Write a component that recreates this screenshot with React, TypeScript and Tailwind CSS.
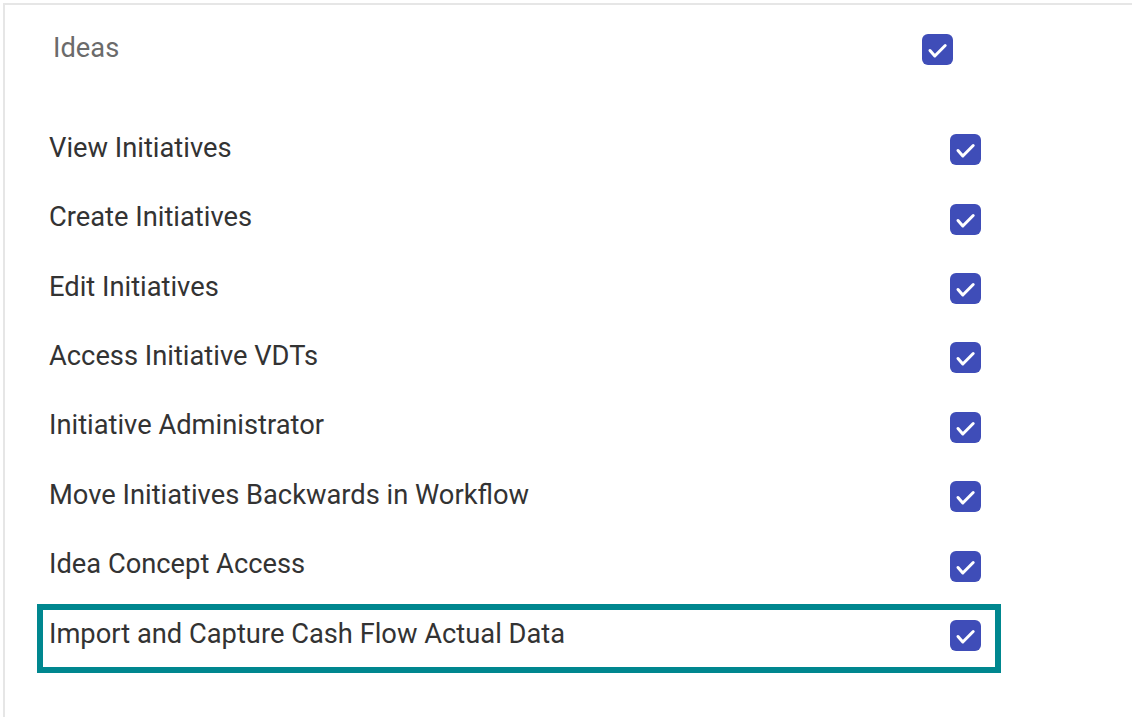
import React from "react";

const permissions = [
  "View Initiatives",
  "Create Initiatives",
  "Edit Initiatives",
  "Access Initiative VDTs",
  "Initiative Administrator",
  "Move Initiatives Backwards in Workflow",
  "Idea Concept Access",
  "Import and Capture Cash Flow Actual Data",
];

const CheckBox = () => (
  <span className="flex h-[31px] w-[31px] shrink-0 items-center justify-center rounded-[6px] bg-[#3f4db8]">
    <svg width="31" height="31" viewBox="0 0 31 31" fill="none">
      <polyline
        points="8,16.5 12.8,22 23.2,11.5"
        stroke="white"
        strokeWidth="3"
        strokeLinecap="round"
        strokeLinejoin="round"
      />
    </svg>
  </span>
);

export default function App() {
  return (
    <div className="relative h-[717px] w-[1132px] overflow-hidden bg-white pl-[3px] pt-[3px] font-['Roboto',sans-serif]">
      <div className="h-full border-l-2 border-t-2 border-[#e6e6e6]">
        {/* header */}
        <div className="mt-[10px] flex h-[69.43px] w-[948px] items-center pl-[48px]">
          <span className="-mt-[3px] text-[27.3px] text-[#6b6b6b]">Ideas</span>
          <span className="ml-auto">
            <CheckBox />
          </span>
        </div>

        {/* rows */}
        <div className="mt-[30.5px] flex w-[976px] flex-col pl-[44px]">
          {permissions.map((p) => (
            <div key={p} className="flex h-[69.43px] items-center">
              <span className="-mt-[3px] text-[27.3px] text-[#333333]">{p}</span>
              <span className="ml-auto">
                <CheckBox />
              </span>
            </div>
          ))}
        </div>
      </div>

      {/* highlight annotation */}
      <div className="pointer-events-none absolute left-[37px] top-[604px] h-[69px] w-[964px] border-[6px] border-[#00878f]" />
    </div>
  );
}
